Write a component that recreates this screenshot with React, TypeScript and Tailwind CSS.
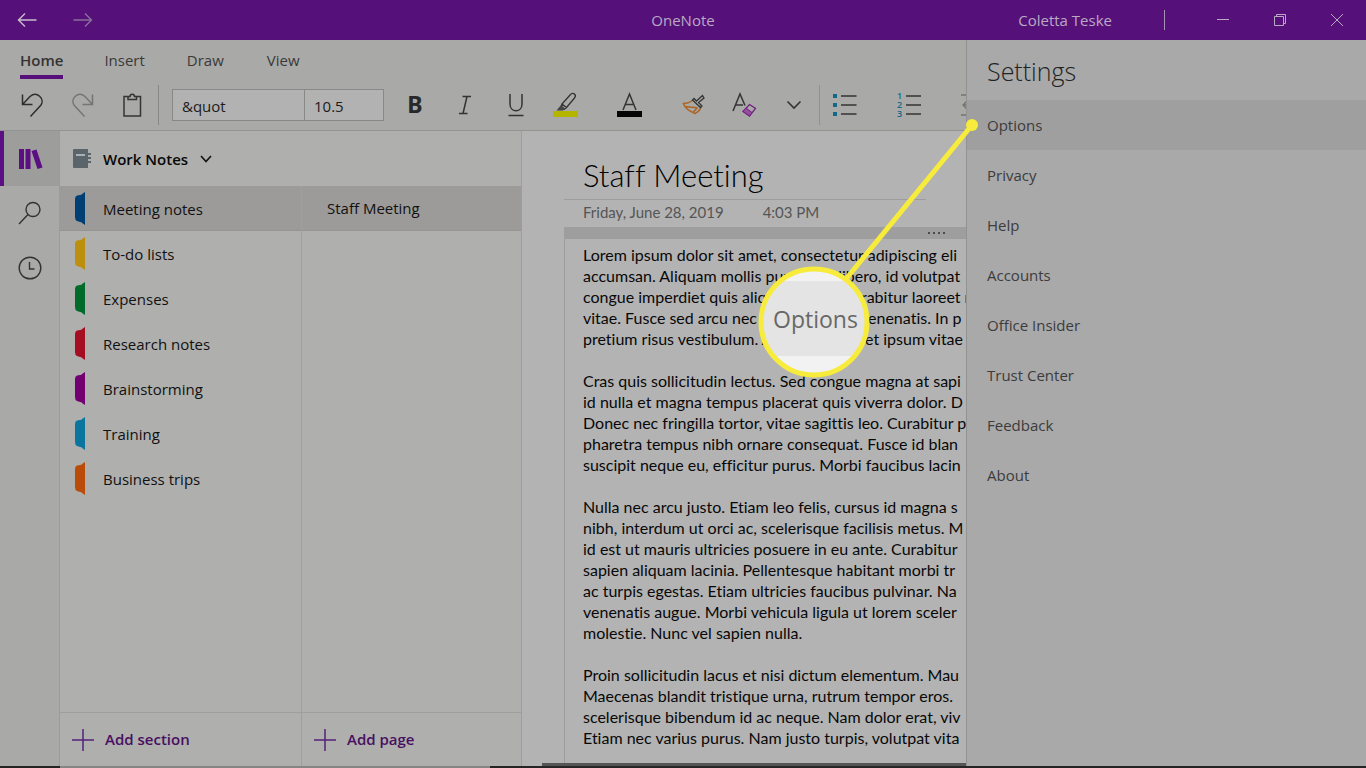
import type { ReactNode } from "react";

const sections = [
  { name: "Meeting notes", color: "text-[#003f74]" },
  { name: "To-do lists", color: "text-[#bd8f0e]" },
  { name: "Expenses", color: "text-[#006b2b]" },
  { name: "Research notes", color: "text-[#a50d20]" },
  { name: "Brainstorming", color: "text-[#720070]" },
  { name: "Training", color: "text-[#0a76a0]" },
  { name: "Business trips", color: "text-[#b94c08]" },
];

const settings = ["Options", "Privacy", "Help", "Accounts", "Office Insider", "Trust Center", "Feedback", "About"];

const paragraphs = [
  [
    "Lorem ipsum dolor sit amet, consectetur adipiscing eli",
    "accumsan. Aliquam mollis purus nec libero, id volutpat",
    "congue imperdiet quis aliquet lorem. Curabitur laoreet r",
    "vitae. Fusce sed arcu nec nulla a ornare venenatis. In p",
    "pretium risus vestibulum. Aliquam sit amet ipsum vitae",
  ],
  [
    "Cras quis sollicitudin lectus. Sed congue magna at sapi",
    "id nulla et magna tempus placerat quis viverra dolor. D",
    "Donec nec fringilla tortor, vitae sagittis leo. Curabitur p",
    "pharetra tempus nibh ornare consequat. Fusce id blan",
    "suscipit neque eu, efficitur purus. Morbi faucibus lacin",
  ],
  [
    "Nulla nec arcu justo. Etiam leo felis, cursus id magna s",
    "nibh, interdum ut orci ac, scelerisque facilisis metus. M",
    "id est ut mauris ultricies posuere in eu ante. Curabitur",
    "sapien aliquam lacinia. Pellentesque habitant morbi tr",
    "ac turpis egestas. Etiam ultricies faucibus pulvinar. Na",
    "venenatis augue. Morbi vehicula ligula ut lorem sceler",
    "molestie. Nunc vel sapien nulla.",
  ],
  [
    "Proin sollicitudin lacus et nisi dictum elementum. Mau",
    "Maecenas blandit tristique urna, rutrum tempor eros.",
    "scelerisque bibendum id ac neque. Nam dolor erat, viv",
    "Etiam nec varius purus. Nam justo turpis, volutpat vita",
  ],
];

function IconButton({ label, className, children }: { label: string; className: string; children: ReactNode }) {
  return (
    <button type="button" aria-label={label} className={"flex shrink-0 items-center justify-center " + className}>
      {children}
    </button>
  );
}

function TitleBar() {
  return (
    <header className="grid h-10 shrink-0 grid-cols-[1fr_auto_1fr] items-center bg-[#551179] text-[15px] text-[#b9a9c3]">
      <div className="flex items-center gap-9 pl-[17px]">
        <IconButton label="Back" className="h-5 w-5">
          <svg width="20" height="16" viewBox="0 0 20 16" fill="none" stroke="#c8bccd" strokeWidth="1.4">
            <path d="M19.500 8H1M8 1.500L1.500 8L8 14.500" />
          </svg>
        </IconButton>
        <IconButton label="Forward" className="h-5 w-5">
          <svg width="20" height="16" viewBox="0 0 20 16" fill="none" stroke="#8a6f9b" strokeWidth="1.4">
            <path d="M0.500 8H19M12 1.500L18.500 8L12 14.500" />
          </svg>
        </IconButton>
      </div>
      <h1>OneNote</h1>
      <div className="flex items-center justify-end">
        <span>Coletta Teske</span>
        <span className="ml-[52px] h-5 w-px bg-[#a690b3]" />
        <div className="ml-[50px] flex gap-[41px] pr-[21px]">
          <IconButton label="Minimize" className="h-4 w-4">
            <svg width="16" height="16" viewBox="0 0 16 16" stroke="#b9a9c3">
              <path d="M2 7.500H14" />
            </svg>
          </IconButton>
          <IconButton label="Restore" className="h-4 w-4">
            <svg width="16" height="16" viewBox="0 0 16 16" fill="none" stroke="#b9a9c3">
              <path d="M2.500 4.500H11.500V13.500H2.500ZM4.500 4.500V2.500H13.500V11.500H11.500" />
            </svg>
          </IconButton>
          <IconButton label="Close" className="h-4 w-4">
            <svg width="16" height="16" viewBox="0 0 16 16" stroke="#b9a9c3">
              <path d="M2 2L14 14M14 2L2 14" />
            </svg>
          </IconButton>
        </div>
      </div>
    </header>
  );
}

function Ribbon() {
  return (
    <div className="h-[91px] shrink-0 overflow-hidden border-b border-[#939391] bg-[#a9a9a7] text-[#3a3a39]">
      <nav className="flex h-[39px] items-stretch text-[15px] leading-[41px]">
        <a href="#home" className="ml-5 border-b-4 border-[#551179] font-semibold leading-[41px] text-[#333]">Home</a>
        <a href="#insert" className="ml-[41px]">Insert</a>
        <a href="#draw" className="ml-[42px]">Draw</a>
        <a href="#view" className="ml-[43px]">View</a>
      </nav>
      <div className="flex h-[51px] w-max items-center">
        <IconButton label="Undo" className="ml-5 h-8 w-6">
          <svg width="24" height="26" viewBox="0 0 24 26" fill="none" stroke="#2e2e2e" strokeWidth="1.5">
            <path d="M2.500 2.500V12.500H12.500M2.500 12.500L10 4.500C17-1.500 25 7 21 13L10.500 24.500" />
          </svg>
        </IconButton>
        <IconButton label="Redo" className="ml-[27px] h-8 w-6">
          <svg width="24" height="26" viewBox="0 0 24 26" fill="none" stroke="#757574" strokeWidth="1.500">
            <path d="M21.500 2.500V12.500H11.500M21.500 12.500L14 4.500C7-1.500-1 7 3 13L13.500 24.500" />
          </svg>
        </IconButton>
        <IconButton label="Paste" className="ml-[25px] h-8 w-6">
          <svg width="24" height="26" viewBox="0 0 24 26" fill="none" stroke="#343432" strokeWidth="1.500">
            <path d="M8 4.500H4V24H20.500V4.500H16.500M8 7.500H16.500V4.500H14.500C14.500 1.500 10 1.500 10 4.500H8Z" />
          </svg>
        </IconButton>
        <span className="ml-[14px] h-10 w-px bg-[#888886]" />
        <input aria-label="Font" defaultValue="&amp;quot" className="ml-[13px] h-8 w-[133px] border border-[#888887] bg-[#b2b2b2] px-[9px] pt-0.5 text-[15px] text-[#1c1c1c] outline-none" />
        <input aria-label="Font size" defaultValue="10.5" className="-ml-px h-8 w-20 border border-[#888887] bg-[#b2b2b2] px-[9px] pt-0.5 text-[15px] text-[#1c1c1c] outline-none" />
        <IconButton label="Bold" className="ml-[19px] h-8 w-6 font-['Noto_Sans',sans-serif] text-[23px] font-bold text-[#282828]">B</IconButton>
        <IconButton label="Italic" className="ml-[26px] h-8 w-6">
          <svg width="16" height="20" viewBox="0 0 16 20" fill="none" stroke="#333" strokeWidth="1.500">
            <path d="M5.500 1.500H14M2 18.500H10.500M10 1.500L6 18.500" />
          </svg>
        </IconButton>
        <IconButton label="Underline" className="ml-[27px] h-8 w-6">
          <svg width="18" height="24" viewBox="0 0 18 24" fill="none" stroke="#333" strokeWidth="1.500">
            <path d="M3 1V11C3 20 15 20 15 11V1M1.500 22.500H16.500" />
          </svg>
        </IconButton>
        <IconButton label="Highlight" className="ml-6 h-8 w-7">
          <svg width="26" height="26" viewBox="0 0 26 26" fill="none">
            <path d="M0 19H25V25H0Z" fill="#b5b500" />
            <path d="M9 12L17.500 2.500C20-.5 24 3 21.500 6L13.500 15.500ZM9 12L8 15L11 17.500L13.500 15.500" stroke="#343434" strokeWidth="1.300" />
            <path d="M8 13L3.500 18.500H10L12 16.500Z" fill="#444" />
          </svg>
        </IconButton>
        <IconButton label="Font color" className="ml-9 h-8 w-7">
          <svg width="26" height="26" viewBox="0 0 26 26" fill="none">
            <path d="M0 19H25V25H0Z" fill="#050505" />
            <path d="M6 18L12.500 2L19 18M8.300 12.500H16.700" stroke="#343434" strokeWidth="1.500" />
          </svg>
        </IconButton>
        <IconButton label="Format painter" className="ml-[38px] h-8 w-6">
          <svg width="24" height="24" viewBox="0 0 24 24" fill="none">
            <path d="M11 7C8 9.500 5 10.500 1.500 10.500C3 16 8 18 13 20.500C17 18.500 18.500 16.500 18.500 14M4 13.500C8 15 12 13.500 15 15L11.500 19" stroke="#ac6420" strokeWidth="1.500" />
            <path d="M10.500 7L18.500 14.500L20 13L16.500 9.500L22 5L20.500 2.500L14.500 8L12 5.500Z" fill="#a9a9a7" stroke="#343434" strokeWidth="1.300" />
          </svg>
        </IconButton>
        <IconButton label="Clear formatting" className="ml-6 h-8 w-7">
          <svg width="26" height="26" viewBox="0 0 26 26" fill="none">
            <path d="M2 19L9 2L14 13.500M4.500 13H12" stroke="#343434" strokeWidth="1.500" />
            <path d="M18.500 12.500L24.500 16.500L18.500 24L12 19.500Z" stroke="#752080" strokeWidth="1.300" />
            <path d="M15 16L21 20.500L18.500 24L12 19.500Z" fill="#934f9e" stroke="#752080" />
          </svg>
        </IconButton>
        <IconButton label="More formatting" className="ml-6 h-8 w-6">
          <svg width="16" height="10" viewBox="0 0 16 10" fill="none" stroke="#343434" strokeWidth="1.600">
            <path d="M1.500 1.500L8 8L14.500 1.500" />
          </svg>
        </IconButton>
        <span className="ml-[13px] h-10 w-px bg-[#92908e]" />
        <IconButton label="Bulleted list" className="ml-[13px] h-8 w-6">
          <svg width="24" height="24" viewBox="0 0 24 24">
            <path d="M0 1H4V5H0ZM0 10H4V14H0ZM0 19H4V23H0Z" fill="#126888" />
            <path d="M8 3H23.500M8 12H23.500M8 21H23.500" stroke="#343434" strokeWidth="1.500" />
          </svg>
        </IconButton>
        <IconButton label="Numbered list" className="ml-10 h-8 w-6">
          <svg width="24" height="26" viewBox="0 0 24 26">
            <path d="M9 4H24M9 13H24M9 22H24" stroke="#343434" strokeWidth="1.500" />
            <text x="0" y="7" fontSize="9" fontWeight="600" fill="#126888">1</text>
            <text x="0" y="16" fontSize="9" fontWeight="600" fill="#126888">2</text>
            <text x="0" y="25" fontSize="9" fontWeight="600" fill="#126888">3</text>
          </svg>
        </IconButton>
        <IconButton label="Decrease indent" className="ml-10 h-8 w-6">
          <svg width="24" height="24" viewBox="0 0 24 24" fill="none" stroke="#737372" strokeWidth="1.300">
            <path d="M0 2H22M0 22H22M6 8L2 12L6 16M2 12H12" />
          </svg>
        </IconButton>
      </div>
    </div>
  );
}

function Rail() {
  return (
    <nav className="flex w-[60px] shrink-0 flex-col border-r border-[#9d9b99] bg-[#a9a9a7]">
      <IconButton label="Notebooks" className="h-[55px] w-full border-l-4 border-[#5b0f83] bg-[#9d9d9b] pr-0.5">
        <svg width="24" height="22" viewBox="0 0 24 22" fill="#5b0f83">
          <path d="M0 1H5V21H0ZM6.500 1H11.500V21H6.500ZM12.500 3L17.500 1.500L23.500 19.500L18.500 21Z" />
        </svg>
      </IconButton>
      <IconButton label="Search" className="h-[55px] w-full pb-px pl-px">
        <svg width="24" height="24" viewBox="0 0 24 24" fill="none" stroke="#333" strokeWidth="1.400">
          <circle cx="15" cy="8.500" r="7" />
          <path d="M10 13.500L1 23" />
        </svg>
      </IconButton>
      <IconButton label="Recent notes" className="h-[55px] w-full pb-px pl-px">
        <svg width="24" height="24" viewBox="0 0 24 24" fill="none" stroke="#333" strokeWidth="1.400">
          <circle cx="12" cy="12" r="10.800" />
          <path d="M11.500 6V13H16.500" />
        </svg>
      </IconButton>
    </nav>
  );
}

function AddButton({ children }: { children: ReactNode }) {
  return (
    <button type="button" className="flex h-[54px] w-full shrink-0 items-center gap-[11px] border-t border-[#a19f9e] pl-3 text-[15px] font-semibold text-[#481062]">
      <svg width="22" height="22" viewBox="0 0 22 22" stroke="#54227a" strokeWidth="1.500">
        <path d="M11 0V22M0 11H22" />
      </svg>
      {children}
    </button>
  );
}

function Notebook() {
  return (
    <div className="flex w-[462px] shrink-0 flex-col border-r border-[#a09e9d] bg-[#afafad]">
      <button type="button" className="flex h-[55px] shrink-0 items-center pl-3 pt-px text-[15px] font-semibold text-[#080808]">
        <svg width="20" height="20" viewBox="0 0 20 20" fill="#59646b">
          <path d="M2 0H16V19H2Q1 19 1 18V1Q1 0 2 0Z" />
          <path d="M16 4H19V6H16ZM16 8H19V10H16ZM16 12H19V14H16Z" />
          <path d="M4 5H13V7H4Z" fill="#a9b0b2" />
        </svg>
        <span className="ml-[11px]">Work Notes</span>
        <svg className="ml-3" width="12" height="8" viewBox="0 0 12 8" fill="none" stroke="#151515" strokeWidth="1.700">
          <path d="M1 1L6 6.500L11 1" />
        </svg>
      </button>
      <div className="flex min-h-0 flex-1">
        <section className="flex w-[242px] shrink-0 flex-col border-r border-[#a19f9e]">
          <ul className="min-h-0 flex-1 text-[15px] text-[#111]">
            {sections.map(({ name, color }, i) => (
              <li key={name}>
                <button type="button" className={"flex h-[45px] w-full items-center gap-[18px] border-b pl-[14px] text-left " + (i === 0 ? "border-[#969492] bg-[#9d9b99]" : "border-transparent")}>
                  <svg className={color} width="11" height="33" viewBox="0 0 11 33" fill="currentColor">
                    <path d="M11 0V33L8 31Q8 30 6 30L3 29Q1 28 1 25V7Q1 4 3 3.500L6 3Q8 3 8 2Z" />
                  </svg>
                  <span className="pt-0.5">{name}</span>
                </button>
              </li>
            ))}
          </ul>
          <AddButton>Add section</AddButton>
        </section>
        <section className="flex min-w-0 flex-1 flex-col">
          <div className="min-h-0 flex-1">
            <button type="button" className="h-[45px] w-full border-b border-[#969492] bg-[#9d9b99] pl-[25px] text-left text-[15px] text-[#111]">Staff Meeting</button>
          </div>
          <AddButton>Add page</AddButton>
        </section>
      </div>
    </div>
  );
}

function Page() {
  return (
    <main className="flex min-w-0 flex-1 flex-col overflow-hidden bg-[#b3b3b3] pl-[42px] pt-[21px] font-['Lato',sans-serif] [font-variant-ligatures:none]">
      <div className="mr-10 border-b border-[#9d9d9d] pl-[19px]">
        <h2 className="h-[47px] whitespace-nowrap text-[31px] font-light leading-[46px] text-black">Staff Meeting</h2>
      </div>
      <div className="flex h-[27px] shrink-0 gap-[39px] whitespace-nowrap pl-[19px] text-[15px] leading-6 text-[#555]">
        <span>Friday, June 28, 2019</span>
        <span>4:03 PM</span>
      </div>
      <div className="flex h-3 shrink-0 items-center justify-end gap-[3px] bg-[#9e9e9e] pr-[21px]">
        <span className="h-0.5 w-0.5 bg-[#4c4c4c]" />
        <span className="h-0.5 w-0.5 bg-[#4c4c4c]" />
        <span className="h-0.5 w-0.5 bg-[#4c4c4c]" />
        <span className="h-0.5 w-0.5 bg-[#4c4c4c]" />
      </div>
      <article className="flex min-h-0 flex-1 flex-col gap-[21px] overflow-hidden border-l border-[#9d9d9d] pl-[18px] pt-[5px] text-[16px] leading-[21px] text-[#080808]">
        {paragraphs.map((lines) => (
          <p key={lines[0]} className="whitespace-nowrap">
            {lines.map((line) => (
              <span key={line} className="block">{line}</span>
            ))}
          </p>
        ))}
      </article>
      <div className="-ml-[22px] h-[3px] shrink-0 bg-[#555]" />
    </main>
  );
}

function SettingsPanel() {
  return (
    <aside className="w-[400px] shrink-0 border-l border-[#929292] bg-[#a9a9a9] text-[#3c3c3c]">
      <h2 className="h-[60px] pl-5 text-[25px] font-light leading-[62px] text-[#222]">Settings</h2>
      <ul className="text-[15px]">
        {settings.map((name, i) => (
          <li key={name}>
            <button type="button" className={"h-[50px] w-full pl-5 text-left " + (i === 0 ? "bg-[#9f9f9f]" : "")}>{name}</button>
          </li>
        ))}
      </ul>
    </aside>
  );
}

function Callout() {
  return (
    <div className="pointer-events-none absolute right-[386px] top-[116px] h-[264px] w-[224px]">
      <svg className="absolute inset-0" width="224" height="264" viewBox="0 0 224 264">
        <defs>
          <clipPath id="lens"><circle cx="58" cy="206" r="53" /></clipPath>
        </defs>
        <path d="M216 9L90 163" stroke="#f7ec3b" strokeWidth="5" />
        <circle cx="216" cy="9" r="6" fill="#f7ec3b" />
        <g clipPath="url(#lens)">
          <path d="M0 150H120V264H0Z" fill="#f2f2f2" />
          <path d="M0 165H120V240H0Z" fill="#e4e4e4" />
        </g>
        <circle cx="58" cy="206" r="53" fill="none" stroke="#f7ec3b" strokeWidth="5" />
      </svg>
      <span className="absolute left-[17px] top-[187px] text-[23px] leading-8 text-[#686868]">Options</span>
    </div>
  );
}

export default function App() {
  return (
    <div className="relative flex h-screen flex-col overflow-hidden bg-[#b3b3b3] font-['Open_Sans',sans-serif]">
      <TitleBar />
      <div className="flex min-h-0 flex-1">
        <div className="flex min-w-0 flex-1 flex-col">
          <Ribbon />
          <div className="flex min-h-0 flex-1">
            <Rail />
            <Notebook />
            <Page />
          </div>
        </div>
        <SettingsPanel />
      </div>
      <footer className="flex h-0.5 shrink-0 bg-[#252525]">
        <span className="ml-[60px] w-[430px] bg-[#858585]" />
      </footer>
      <Callout />
    </div>
  );
}
